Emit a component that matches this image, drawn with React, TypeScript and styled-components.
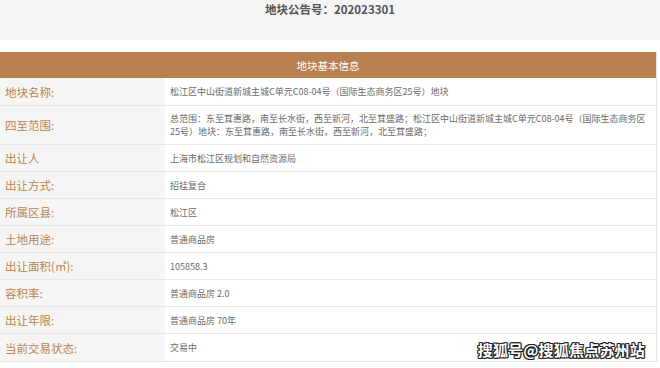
import React from "react";
import styled, { createGlobalStyle } from "styled-components";

const Global = createGlobalStyle`
  html, body { margin: 0; padding: 0; background: #ffffff; }
  body { font-family: "Noto Sans CJK SC", "Noto Sans", sans-serif; }
`;

const Page = styled.div`
  position: relative;
  width: 660px;
  height: 368px;
  overflow: hidden;
  background: #ffffff;
`;

const TitleBar = styled.div`
  height: 40px;
  background: #f4f4f4;
  display: flex;
  justify-content: center;
  align-items: flex-start;
`;

const Title = styled.h1`
  margin: 0;
  font-size: 11.5px;
  line-height: 18px;
  font-weight: 700;
  color: #555555;
`;

const Table = styled.div`
  margin-top: 12px;
  width: 657px;
  border-right: 1px solid #e4e4e4;
  box-sizing: border-box;
`;

const Header = styled.div`
  height: 26px;
  background: #b98150;
  color: #ffffff;
  font-size: 10.5px;
  display: flex;
  align-items: center;
  justify-content: center;
`;

const Row = styled.div<{ $h: number }>`
  display: grid;
  grid-template-columns: 165px 1fr;
  height: ${(p) => p.$h}px;
  box-sizing: border-box;
  border-bottom: 1px solid #e6e6e6;
`;

const Label = styled.div`
  background: #f5f5f5;
  color: #ba844f;
  font-size: 11.5px;
  padding-left: 5px;
  display: flex;
  align-items: center;
`;

const Value = styled.div`
  color: #6a6a6a;
  font-size: 9px;
  line-height: 13px;
  padding-left: 5px;
  padding-right: 6px;
  display: flex;
  align-items: center;
`;

const Watermark = styled.div`
  position: absolute;
  right: 15px;
  bottom: 8px;
  font-size: 15px;
  font-weight: 700;
  color: #ffffff;
  letter-spacing: 0.2px;
  text-shadow: 1px 0 0 #222, -1px 0 0 #222, 0 1px 0 #222, 0 -1px 0 #222,
    1px 1px 0 #222, -1px -1px 0 #222, 1px -1px 0 #222, -1px 1px 0 #222;
`;

type Item = { label: string; value: React.ReactNode; h: number };

const items: Item[] = [
  {
    label: "地块名称:",
    value: "松江区中山街道新城主城C单元C08-04号（国际生态商务区25号）地块",
    h: 28,
  },
  {
    label: "四至范围:",
    value: (
      <span>
        总范围：东至茸惠路，南至长水街，西至新河，北至茸盛路；松江区中山街道新城主城C单元C08-04号（国际生态商务区
        <br />
        25号）地块：东至茸惠路，南至长水街，西至新河，北至茸盛路；
      </span>
    ),
    h: 39,
  },
  { label: "出让人", value: "上海市松江区规划和自然资源局", h: 27 },
  { label: "出让方式:", value: "招挂复合", h: 27 },
  { label: "所属区县:", value: "松江区", h: 27 },
  { label: "土地用途:", value: "普通商品房", h: 27 },
  { label: "出让面积(㎡):", value: "105858.3", h: 27 },
  { label: "容积率:", value: "普通商品房 2.0", h: 27 },
  { label: "出让年限:", value: "普通商品房 70年", h: 27 },
  { label: "当前交易状态:", value: "交易中", h: 28 },
];

export default function App() {
  return (
    <Page>
      <Global />
      <TitleBar>
        <Title>地块公告号：202023301</Title>
      </TitleBar>
      <Table>
        <Header>地块基本信息</Header>
        {items.map((it) => (
          <Row key={it.label} $h={it.h}>
            <Label>{it.label}</Label>
            <Value>{it.value}</Value>
          </Row>
        ))}
      </Table>
      <Watermark>搜狐号@搜狐焦点苏州站</Watermark>
    </Page>
  );
}
